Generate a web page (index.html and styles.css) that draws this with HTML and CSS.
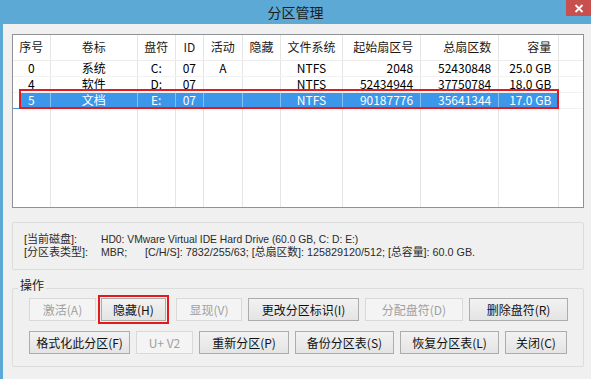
FILE: index.html
```html
<!DOCTYPE html>
<html lang="zh-CN">
<head>
<meta charset="utf-8">
<title>分区管理</title>
<link rel="stylesheet" href="styles.css">
</head>
<body>
<div class="window">
  <div class="titlebar">
    <span class="title">分区管理</span>
    <span class="close"><svg width="10" height="9" viewBox="0 0 10 9"><path d="M1.5 1 L8.5 8 M8.5 1 L1.5 8" stroke="#fff" stroke-width="1.8" fill="none"/></svg></span>
  </div>
  <div class="frame">
    <div class="content">
      <div class="list">
        <table class="grid">
          <colgroup>
            <col class="c-no"><col class="c-label"><col class="c-drive"><col class="c-id"><col class="c-act"><col class="c-hide"><col class="c-fs"><col class="c-start"><col class="c-total"><col class="c-size"><col class="c-pad">
          </colgroup>
          <thead>
            <tr><th>序号</th><th>卷标</th><th>盘符</th><th>ID</th><th>活动</th><th>隐藏</th><th>文件系统</th><th class="r">起始扇区号</th><th class="r">总扇区数</th><th class="r">容量</th><th></th></tr>
          </thead>
          <tbody>
            <tr><td>0</td><td>系统</td><td>C:</td><td>07</td><td>A</td><td></td><td>NTFS</td><td class="r">2048</td><td class="r">52430848</td><td class="r">25.0 GB</td><td></td></tr>
            <tr><td>4</td><td>软件</td><td>D:</td><td>07</td><td></td><td></td><td>NTFS</td><td class="r">52434944</td><td class="r">37750784</td><td class="r">18.0 GB</td><td></td></tr>
            <tr class="sel"><td class="first">5</td><td>文档</td><td>E:</td><td>07</td><td></td><td></td><td>NTFS</td><td class="r">90187776</td><td class="r">35641344</td><td class="r">17.0 GB</td><td class="last"></td></tr>
            <tr class="filler"><td></td><td></td><td></td><td></td><td></td><td></td><td></td><td></td><td></td><td></td><td></td></tr>
          </tbody>
        </table>
        <div class="sel-mark"></div>
      </div>

      <div class="info">
        <div class="info-row"><span class="key">[当前磁盘]:</span><span class="lat">HD0: VMware Virtual IDE Hard Drive (60.0 GB, C: D: E:)</span></div>
        <div class="info-row"><span class="key">[分区表类型]:</span><span class="mbr">MBR;</span><span class="val">[C/H/S]: 7832/255/63; [总扇区数]: 125829120/512; [总容量]: 60.0 GB.</span></div>
      </div>

      <fieldset class="ops">
        <legend>操作</legend>
        <div class="btn-row">
          <button class="btn dis w-act">激活(A)</button>
          <span class="mark"><button class="btn w-hide">隐藏(H)</button></span>
          <button class="btn dis w-show">显现(V)</button>
          <button class="btn w-chg">更改分区标识(I)</button>
          <button class="btn dis w-assign">分配盘符(D)</button>
          <button class="btn w-del">删除盘符(R)</button>
        </div>
        <div class="btn-row">
          <button class="btn w-fmt">格式化此分区(F)</button>
          <button class="btn dis w-uv">U+ V2</button>
          <button class="btn w-re">重新分区(P)</button>
          <button class="btn w-bak">备份分区表(S)</button>
          <button class="btn w-rest">恢复分区表(L)</button>
          <button class="btn w-close">关闭(C)</button>
        </div>
      </fieldset>
    </div>
  </div>
</div>
</body>
</html>
```

FILE: styles.css
```css
* { box-sizing: border-box; }
html, body {
  margin: 0;
  padding: 0;
  width: 591px;
  height: 379px;
  overflow: hidden;
  background: #5ca9d5;
  font-family: "Noto Sans CJK SC", "Noto Sans", sans-serif;
  font-size: 12px;
  color: #000;
}
.window {
  display: flex;
  flex-direction: column;
  width: 591px;
  height: 379px;
}
.titlebar {
  position: relative;
  height: 24px;
  flex: none;
  display: flex;
  align-items: center;
  justify-content: center;
  background: #5ca9d5;
}
.title {
  font-size: 14px;
  line-height: 16px;
  color: #1b1b1b;
  margin-top: -1px;
}
.close {
  position: absolute;
  right: 0;
  top: 0;
  width: 25px;
  height: 16px;
  background: #c7504f;
  display: flex;
  align-items: center;
  justify-content: center;
}
.frame {
  flex: 1;
  padding-left: 3px;
  display: flex;
}
.content {
  flex: 1;
  background: #f0f0f0;
  padding: 10px 8px 0 9px;
  display: flex;
  flex-direction: column;
}
.list {
  position: relative;
  height: 174px;
  border: 1px solid #8f9396;
  background: #fff;
  flex: none;
}
.grid {
  width: 100%;
  height: 100%;
  table-layout: fixed;
  border-collapse: collapse;
}
.c-no { width: 37px; }
.c-label { width: 87px; }
.c-drive { width: 38px; }
.c-id { width: 28px; }
.c-act { width: 39px; }
.c-hide { width: 38px; }
.c-fs { width: 62px; }
.c-start { width: 78px; }
.c-total { width: 78px; }
.c-size { width: 60px; }
.c-pad { width: 24px; }

.grid th, .grid td {
  padding: 0;
  text-align: center;
  white-space: nowrap;
  overflow: hidden;
  border-left: 1px solid #e5e5e5;
  line-height: 14px;
}
.grid th:first-child, .grid td:first-child { border-left: none; }
.grid th {
  font-weight: normal;
  height: 25px;
  color: #1a1a1a;
  border-bottom: 1px solid #ececec;
}
.grid td { height: 16px; border-bottom: 1px solid #f2f2f2; }
.grid .r { text-align: right; padding-right: 7px; }
.grid tr.filler td { height: auto; border-bottom: none; }

.grid tr.sel td {
  background: #3c97ea;
  color: #fff;
  border-left-color: #86c0f2;
  border-bottom-color: #3c97ea;
}
.grid tr.sel td.first {
  background: linear-gradient(to right, #fff 6px, #3c97ea 6px);
}
.grid tr.sel td.last {
  background: #fff;
  border-left-color: #e5e5e5;
  border-bottom-color: #f2f2f2;
}
.sel-mark {
  position: absolute;
  left: 6px;
  top: 54px;
  width: 540px;
  height: 20px;
  border: 2px solid #e3191c;
  pointer-events: none;
}

.info {
  margin-top: 14px;
  height: 48px;
  border: 1px solid #dcdcdc;
  border-radius: 2px;
  padding: 10px 0 0 11px;
  color: #2b2b2b;
  font-family: "Liberation Sans", "Noto Sans CJK SC", sans-serif;
  font-size: 11px;
  flex: none;
}
.info-row {
  display: flex;
  line-height: 13px;
  height: 13px;
  white-space: nowrap;
}
.info-row .key { width: 77px; flex: none; font-size: 11px; }
.info-row .mbr { width: 44px; flex: none; font-size: 10.5px; }
.info-row .lat { font-size: 10.3px; }
.info-row .val { font-size: 10.8px; }

.ops {
  margin: 8px 0 0 0;
  padding: 0 15px 12px 16px;
  border: 1px solid #dcdcdc;
  border-radius: 2px;
  min-width: 0;
  flex: none;
}
.ops legend {
  padding: 0 2px 6px 2px;
  margin-left: -11px;
  line-height: 14px;
  color: #1a1a1a;
}
.btn-row {
  display: flex;
  gap: 6px;
  align-items: center;
}
.btn-row + .btn-row { margin-top: 10px; }
.btn {
  height: 23px;
  padding: 0;
  margin: 0;
  border: 1px solid #acacac;
  border-radius: 0;
  background: linear-gradient(#f2f2f2, #e4e4e4);
  font-family: "Noto Sans CJK SC", "Noto Sans", sans-serif;
  font-size: 12px;
  color: #111;
  display: flex;
  align-items: center;
  justify-content: center;
  flex: none;
}
.btn.dis {
  border-color: #d9d9d9;
  background: #f4f4f4;
  color: #a0a0a0;
}
.mark {
  border: 2px solid #e3191c;
  padding: 1px;
  margin: -3px 1px -3px -4px;
  display: flex;
  flex: none;
}
.w-act { width: 67px; }
.w-hide { width: 65px; }
.w-show { width: 66px; }
.w-chg { width: 111px; }
.w-assign { width: 98px; }
.w-del { width: 99px; }
.w-fmt { width: 101px; }
.w-uv { width: 57px; }
.w-re { width: 90px; }
.w-bak { width: 99px; }
.w-rest { width: 99px; }
.w-close { width: 62px; }
```
